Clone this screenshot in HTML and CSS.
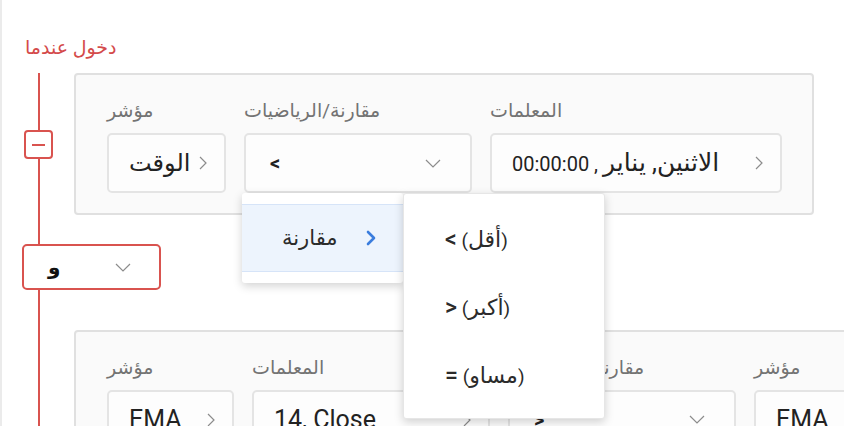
FILE: index.html
```html
<!DOCTYPE html>
<html lang="ar">
<head>
<meta charset="utf-8">
<title>دخول عندما</title>
<link rel="stylesheet" href="styles.css">
</head>
<body>
<div class="page">
  <div class="title">دخول عندما</div>
  <div class="tree">
    <div class="toggle"><span class="minus"></span></div>

    <div class="card">
      <div class="field f-ind1">
        <div class="label">مؤشر</div>
        <div class="box">
          <span class="val ar">الوقت</span>
          <svg class="chev-r" width="8" height="14" viewBox="0 0 8 14"><polyline points="1,1 7,7 1,13"/></svg>
        </div>
      </div>
      <div class="field f-cmp1">
        <div class="label">مقارنة/الرياضيات</div>
        <div class="box select">
          <span class="val sym">&lt;</span>
          <svg class="chev-d" width="16" height="9" viewBox="0 0 16 9"><polyline points="1,1 8,8 15,1"/></svg>
        </div>
        <div class="cascader">
          <ul class="menu m1">
            <li class="active"><span>مقارنة</span>
              <svg class="chev-b" width="10" height="16" viewBox="0 0 10 16"><polyline points="2,2 8,8 2,14"/></svg>
            </li>
          </ul>
          <ul class="menu m2">
            <li><span dir="ltr"><span class="op">&lt;</span> (<span class="ar">أقل</span>)</span></li>
            <li><span dir="ltr"><span class="op">&gt;</span> (<span class="ar">أكبر</span>)</span></li>
            <li><span dir="ltr"><span class="op">=</span> (<span class="ar">مساو</span>)</span></li>
          </ul>
        </div>
      </div>
      <div class="field f-par1">
        <div class="label">المعلمات</div>
        <div class="box">
          <span class="val" dir="rtl"><span class="ar-date">الاثنين, يناير</span> , 00:00:00</span>
          <svg class="chev-r" width="8" height="14" viewBox="0 0 8 14"><polyline points="1,1 7,7 1,13"/></svg>
        </div>
      </div>
    </div>

    <div class="join">
      <span class="val">و</span>
      <svg class="chev-d" width="16" height="9" viewBox="0 0 16 9"><polyline points="1,1 8,8 15,1"/></svg>
    </div>

    <div class="card card2">
      <div class="field f-ind2">
        <div class="label">مؤشر</div>
        <div class="box">
          <span class="val lg">EMA</span>
          <svg class="chev-r" width="8" height="14" viewBox="0 0 8 14"><polyline points="1,1 7,7 1,13"/></svg>
        </div>
      </div>
      <div class="field f-par2">
        <div class="label">المعلمات</div>
        <div class="box">
          <span class="val lg">14, Close</span>
          <svg class="chev-r" width="8" height="14" viewBox="0 0 8 14"><polyline points="1,1 7,7 1,13"/></svg>
        </div>
      </div>
      <div class="field f-cmp2">
        <div class="label">مقارنة/الرياضيات</div>
        <div class="box select">
          <span class="val sym">&gt;</span>
          <svg class="chev-d" width="16" height="9" viewBox="0 0 16 9"><polyline points="1,1 8,8 15,1"/></svg>
        </div>
      </div>
      <div class="field f-ind2">
        <div class="label">مؤشر</div>
        <div class="box">
          <span class="val lg">EMA</span>
          <svg class="chev-r" width="8" height="14" viewBox="0 0 8 14"><polyline points="1,1 7,7 1,13"/></svg>
        </div>
      </div>
      <div class="field f-par2">
        <div class="label">المعلمات</div>
        <div class="box">
          <span class="val lg">50, Close</span>
          <svg class="chev-r" width="8" height="14" viewBox="0 0 8 14"><polyline points="1,1 7,7 1,13"/></svg>
        </div>
      </div>
    </div>
  </div>
</div>
</body>
</html>
```

FILE: styles.css
```css
html, body {
  margin: 0;
  padding: 0;
  background: #ffffff;
  overflow: hidden;
}

body {
  font-family: Roboto, "DejaVu Sans", sans-serif;
  color: #222222;
}

.page {
  width: 844px;
  height: 426px;
  box-sizing: border-box;
  border-left: 2px solid #ebebeb;
  padding-top: 37px;
  overflow: hidden;
}

.title {
  margin-left: 23px;
  font-size: 19px;
  line-height: 22px;
  color: #d44a4a;
  margin-bottom: 14px;
  white-space: nowrap;
}

.tree {
  display: grid;
  grid-template-columns: 72px max-content;
  align-items: start;
  background: linear-gradient(#d9534f, #d9534f) no-repeat 36px 0 / 2px 100%;
  min-height: 400px;
}

.toggle {
  grid-column: 1;
  grid-row: 1;
  align-self: center;
  margin-left: 22px;
  width: 29px;
  height: 29px;
  box-sizing: border-box;
  border: 2px solid #d9534f;
  border-radius: 4px;
  background: #ffffff;
  display: flex;
  align-items: center;
  justify-content: center;
}

.minus {
  width: 13px;
  height: 2px;
  background: #d9534f;
}

.card {
  grid-column: 2;
  display: flex;
  gap: 18px;
  padding: 26px 30px 20px 31px;
  border: 2px solid #e0e0e0;
  border-radius: 4px;
  background: #fafafa;
  width: max-content;
}

.card2 {
  grid-row: 3;
}

.field {
  display: flex;
  flex-direction: column;
  flex: none;
}

.f-cmp1 {
  position: relative;
}

.f-ind1 { width: 119px; }
.f-cmp1 { width: 228px; }
.f-par1 { width: 292px; }
.f-ind2 { width: 127px; }
.f-par2 { width: 238px; }
.f-cmp2 { width: 228px; }

.label {
  font-size: 19px;
  line-height: 20px;
  height: 20px;
  color: #737373;
  margin-bottom: 12px;
  white-space: nowrap;
}

.box {
  height: 60px;
  box-sizing: border-box;
  border: 2px solid #e4e4e4;
  border-radius: 5px;
  background: #fdfdfd;
  display: flex;
  align-items: center;
  justify-content: space-between;
  padding: 0 17px 0 20px;
}

.box.select {
  padding: 0 29px 0 24px;
}

.val {
  font-size: 20px;
  line-height: 26px;
  color: #222222;
  white-space: nowrap;
}

.val.ar {
  font-size: 24px;
}

.ar-date {
  font-size: 25px;
}

.val.lg {
  font-size: 25px;
}

.val.sym {
  font-weight: 700;
  font-size: 20px;
}

.chev-r polyline,
.chev-d polyline {
  fill: none;
  stroke: #8c8c8c;
  stroke-width: 1.2;
}

.chev-b polyline {
  fill: none;
  stroke: #3b7ddd;
  stroke-width: 2.6;
  stroke-linecap: round;
  stroke-linejoin: round;
}

.join {
  grid-column: 1 / span 2;
  grid-row: 2;
  margin: 28px 0 38px 20px;
  width: 139px;
  height: 46px;
  box-sizing: border-box;
  border: 2px solid #d9534f;
  border-radius: 5px;
  background: #ffffff;
  display: flex;
  align-items: center;
  justify-content: space-between;
  padding: 0 28px 0 24px;
}

.join .val {
  font-size: 20px;
  font-weight: 700;
  color: #111111;
}

.cascader {
  position: absolute;
  top: 100%;
  left: -2px;
  display: flex;
  align-items: flex-start;
  z-index: 10;
}

.menu {
  list-style: none;
  margin: 0;
  padding: 11px 0;
  background: #ffffff;
  box-shadow: 0 3px 10px rgba(0, 0, 0, 0.18);
  border-radius: 3px;
}

.m1 {
  width: 161px;
}

.m2 {
  width: 202px;
  box-sizing: border-box;
  border: 1px solid #e6e6e6;
  padding: 11px 0 9px;
}

.menu li {
  height: 68px;
  box-sizing: border-box;
  display: flex;
  align-items: center;
  padding-left: 41px;
  font-size: 19px;
  color: #2b2b2b;
  white-space: nowrap;
}

.menu li .ar {
  font-size: 22px;
}

.menu li .op {
  font-size: 23px;
  font-weight: 500;
}

.m1 li.active {
  background: #edf4fd;
  border-top: 1px solid #d6e4f8;
  border-bottom: 1px solid #d6e4f8;
  justify-content: space-between;
  padding-left: 40px;
  padding-right: 27px;
  font-size: 21px;
}
```
